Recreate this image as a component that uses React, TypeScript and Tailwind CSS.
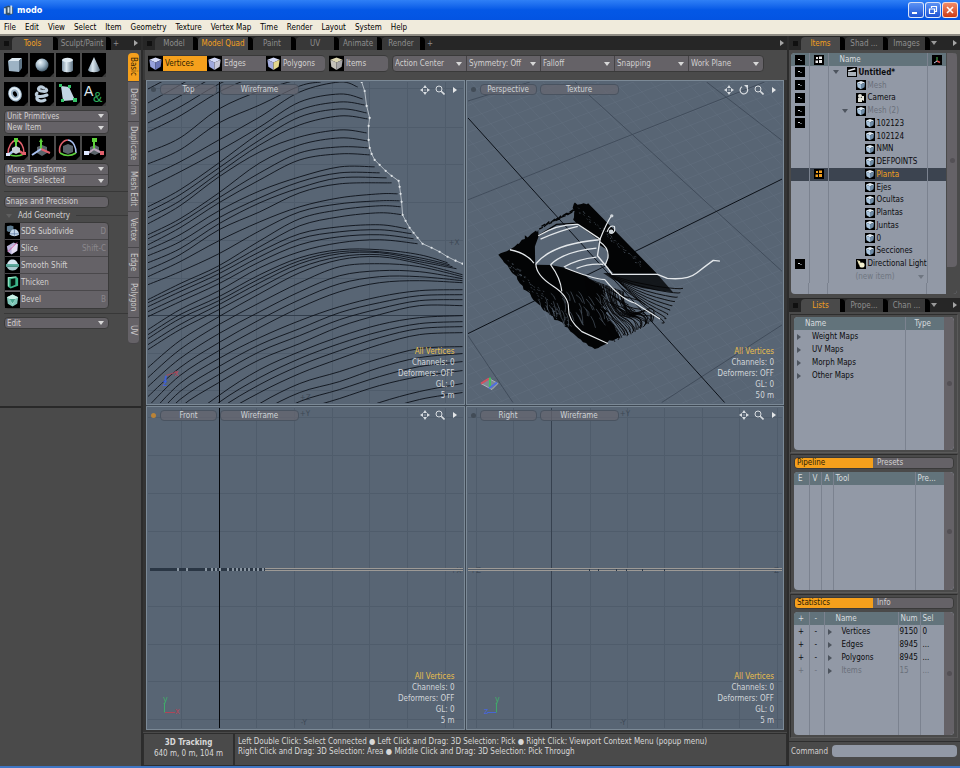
import React from "react";

type Pt = [number, number];

/* ---------- small drawing helpers ---------- */

function smooth(points: Pt[]): string {
  let d = `M${points[0][0]} ${points[0][1]}`;
  for (let i = 0; i < points.length - 1; i++) {
    const p0 = points[Math.max(0, i - 1)];
    const p1 = points[i];
    const p2 = points[i + 1];
    const p3 = points[Math.min(points.length - 1, i + 2)];
    const c1 = [p1[0] + (p2[0] - p0[0]) / 6, p1[1] + (p2[1] - p0[1]) / 6];
    const c2 = [p2[0] - (p3[0] - p1[0]) / 6, p2[1] - (p3[1] - p1[1]) / 6];
    d += `C${c1[0].toFixed(1)} ${c1[1].toFixed(1)} ${c2[0].toFixed(1)} ${c2[1].toFixed(1)} ${p2[0]} ${p2[1]}`;
  }
  return d;
}

function Down({ className = "" }: { className?: string }) {
  return (
    <svg viewBox="0 0 6 4" className={`h-[4px] w-[6px] shrink-0 ${className}`} fill="currentColor" aria-hidden="true">
      <path d="M0 0h6L3 4z" />
    </svg>
  );
}

function Right({ className = "" }: { className?: string }) {
  return (
    <svg viewBox="0 0 4 6" className={`h-[6px] w-[4px] shrink-0 ${className}`} fill="currentColor" aria-hidden="true">
      <path d="M0 0v6L4 3z" />
    </svg>
  );
}

/* ---------- icons ---------- */

function Cube({ top = "#dfe9f2", left = "#a9c4dc", right = "#6e8aa4", className = "h-[16px] w-[16px]" }) {
  return (
    <svg viewBox="0 0 16 16" className={`shrink-0 bg-black ${className}`} aria-hidden="true">
      <path d="M1.500 4L8 1.500 14.500 4 8 6.800z" fill={top} />
      <path d="M1.500 4L8 6.800v8L2.500 11.500z" fill={left} />
      <path d="M14.500 4L8 6.800v8l5.500-3.300z" fill={right} />
    </svg>
  );
}

function Tile({ kind }: { kind: string }) {
  const g = `g-${kind}`;
  const red = "#e0606c";
  const green = "#5ed03c";
  const blue = "#a8c0f0";
  return (
    <svg viewBox="0 0 24 24" className="h-[24px] w-[24px] bg-black" aria-hidden="true">
      <defs>
        <radialGradient id={g} cx="35%" cy="30%" r="75%">
          <stop offset="0" stopColor="#eef6fb" />
          <stop offset=".5" stopColor="#9fb6c6" />
          <stop offset="1" stopColor="#3f5566" />
        </radialGradient>
        <linearGradient id={`${g}l`}>
          <stop offset="0" stopColor="#8297a8" />
          <stop offset=".4" stopColor="#dce8f0" />
          <stop offset="1" stopColor="#5d7283" />
        </linearGradient>
      </defs>
      {kind === "cube" && (
        <g>
          <path d="M4 8l4-3h10l-3 3z" fill="#dce8f0" />
          <path d="M4 8h11v11l-10-1z" fill="#9db3c4" />
          <path d="M15 8l3-3v10l-3 4z" fill="#5e7485" />
        </g>
      )}
      {kind === "sphere" && <circle cx="12" cy="12" r="6.500" fill={`url(#${g})`} />}
      {kind === "cylinder" && (
        <g>
          <path d="M6 7v10c0 3 11 3 11 0V7z" fill={`url(#${g}l)`} />
          <ellipse cx="11.500" cy="7" rx="5.500" ry="2.200" fill="#e2edf4" />
        </g>
      )}
      {kind === "cone" && <path d="M12 4l6 13c-1 3-11 3-12 0z" fill={`url(#${g}l)`} />}
      {kind === "torus" && (
        <g fill="none" transform="rotate(-25 11 12)">
          <ellipse cx="11" cy="12" rx="4.300" ry="5.200" stroke="#9fb6c8" strokeWidth="4.800" />
          <ellipse cx="11" cy="11.700" rx="4.800" ry="5.700" stroke="#e6f0f7" strokeWidth="2" />
        </g>
      )}
      {kind === "tube" && (
        <path d="M14 6C9 3 6 8 11 9s7 0 5-2M7 11c-3 3 3 5 10 2M7 15c-1 4 5 5 8 3" fill="none" stroke="#bccddb" strokeWidth="3" strokeLinecap="round" />
      )}
      {kind === "pen" && (
        <g>
          <path d="M5 4l8 1 6 13-12 1z" fill="#c2d6e4" />
          <path d="M3 2h3v3H3zM12 3h3v3h-3zM17 16h4v4h-4zM5 17h3v3H5z" fill="#35c468" />
        </g>
      )}
      {kind === "text" && (
        <g className="font-['Liberation_Sans',sans-serif]">
          <text x="2" y="14" fontSize="14" fill="#dfe8ee">A</text>
          <text x="11" y="20" fontSize="14" fill="#2fae5e">&amp;</text>
        </g>
      )}
      {kind === "transform" && (
        <g fill="none" strokeWidth="1.500">
          <path d="M4 18C4 10 8 5 12 4c5 1 8 7 8 13" stroke={red} />
          <path d="M4 18q8 4 16 0" stroke={green} />
          <path d="M12 13V4" stroke={green} strokeWidth="2" />
          <path d="M12 13l-8 6" stroke={blue} strokeWidth="2.500" />
          <path d="M12 13l8 5" stroke={red} strokeWidth="2.500" />
          <path d="M8 12l4-2 4 2v4l-4 2-4-2z" fill="#c7cfd6" />
          <path d="M10 2h4v4h-4z" fill={green} />
          <path d="M2 17h4v3H2z" fill="#dfe8ff" />
          <path d="M18 16h4v3h-4z" fill={red} />
        </g>
      )}
      {kind === "move" && (
        <g>
          <path d="M7 11l5-2 5 2v6l-5 3-5-3z" fill="#5b646b" />
          <path d="M11 14V5" stroke={green} strokeWidth="2" />
          <path d="M11 2l2 4H9z" fill={green} />
          <path d="M11 13l9 4" stroke={red} strokeWidth="2" />
          <path d="M11 13l-9 6" stroke={blue} strokeWidth="2" />
        </g>
      )}
      {kind === "rotate" && (
        <g fill="none">
          <path d="M7 10l5-2 5 2v6l-5 2-5-2z" fill="#5b646b" />
          <path d="M4 17C2 10 7 4 12 4" stroke={red} strokeWidth="1.600" />
          <path d="M12 4c6 1 8 8 8 13" stroke={blue} strokeWidth="1.600" />
          <path d="M4 17q8 5 16 0" stroke={green} strokeWidth="1.600" />
        </g>
      )}
      {kind === "scale" && (
        <g>
          <path d="M8 11l5-2 4 2v6l-4 2-5-2z" fill="#5b646b" />
          <path d="M12 13V5" stroke={green} strokeWidth="2" />
          <path d="M12 13l-7 5M12 13l8 4" stroke="#b7a5b8" strokeWidth="2" />
          <path d="M10 2h5v4h-5z" fill={green} />
          <path d="M2 15h5v4H2z" fill="#dfe8ff" />
          <path d="M18 15h4v4h-4z" fill={red} />
        </g>
      )}
      <path d="M24 20v4h-4z" fill="#3c3c3c" />
    </svg>
  );
}

function GeoIcon({ kind }: { kind: string }) {
  return (
    <svg viewBox="0 0 16 16" className="h-[16px] w-[15px] shrink-0 bg-black" aria-hidden="true">
      {kind === "sds" && (
        <g>
          <path d="M2 3l4-1 3 1v5l-5 1-2-1z" fill="#5f7d92" />
          <path d="M5 12c0-8 10-8 10 0-3 2-7 2-10 0z" fill="#c6d8ea" />
          <path d="M10 6v7M5 11h10" stroke="#55719c" strokeWidth=".7" />
        </g>
      )}
      {kind === "slice" && (
        <g>
          <path d="M2 6l7-4 5 2-1 7-6 4-4-3z" fill="#b9b3d8" />
          <path d="M7 6l6-3v8l-6 3z" fill="#e4dcf0" />
          <path d="M3 12L13 2" stroke="#d04f9a" strokeWidth="1" />
        </g>
      )}
      {kind === "smooth" && (
        <g>
          <path d="M2 8c1-8 11-8 12 0z" fill="#d5e6f0" />
          <path d="M1 7h14v3H1z" fill="#5aa79a" />
          <path d="M2 10h12c-2 5-10 5-12 0z" fill="#a9cbd0" />
        </g>
      )}
      {kind === "thicken" && (
        <g>
          <path d="M3 3l9-1 2 2v8l-8 3-3-2z" fill="#3cb58a" />
          <path d="M6 5l5-1v7l-5 2z" fill="#04180f" />
          <path d="M3 3l9-1v1L4 4v9l-1-1z" fill="#a9ecd0" />
        </g>
      )}
      {kind === "bevel" && (
        <g>
          <path d="M2 5l6-3 6 3-1 7-5 3-5-3z" fill="#7fc6b8" />
          <path d="M2 5l6-3 6 3-3 2-3 6-3-6z" fill="#c9f0e6" />
          <path d="M5 7h6l-3 5z" fill="#4da58f" />
        </g>
      )}
    </svg>
  );
}

const NavPan = () => (
  <svg viewBox="0 0 10 10" className="h-[10px] w-[10px]" fill="#d9dde1" aria-hidden="true">
    <path d="M5 0l2 3H3zM5 10l2-3H3zM0 5l3-2v4zM10 5L7 3v4z" />
    <path d="M4.500 4.500h1v1h-1z" />
  </svg>
);
const NavRotate = () => (
  <svg viewBox="0 0 10 10" className="h-[10px] w-[10px]" fill="none" stroke="#d9dde1" strokeWidth="1.200" aria-hidden="true">
    <path d="M3 1.800A3.800 3.800 0 1 0 8 3" />
    <path d="M5 0h4v4z" fill="#d9dde1" stroke="none" />
  </svg>
);
const NavZoom = () => (
  <svg viewBox="0 0 10 10" className="h-[10px] w-[10px]" fill="none" stroke="#d9dde1" aria-hidden="true">
    <circle cx="4" cy="4" r="3" />
    <path d="M6.200 6.200L9.500 9.500" strokeWidth="1.600" />
  </svg>
);

/* ---------- top viewport: terrain contour lines ---------- */

const XS = [148, 180, 219, 260, 300, 340, 380, 420, 463];

// Heights of each contour at the XS stations; `end` closes a line that stops at the boundary.
const CONTOURS: { y: number[]; end?: Pt }[] = [
  { y: [89, 72] },
  { y: [103, 85, 62] },
  { y: [113, 96, 74] },
  { y: [123, 107, 84, 66] },
  { y: [132, 116, 92, 74] },
  { y: [152, 138, 109, 91, 79] },
  { y: [164, 150, 123, 105, 86], end: [321, 82] },
  { y: [177, 162, 140, 117, 92, 82], end: [358, 87] },
  { y: [188, 172, 151, 127, 102, 94], end: [363, 99] },
  { y: [207, 190, 163, 133, 110, 102], end: [365, 105] },
  { y: [212, 195, 168, 140, 117, 109], end: [367, 113] },
  { y: [218, 201, 173, 145, 125, 116], end: [368, 119] },
  { y: [224, 206, 177, 152, 137, 130], end: [367, 133] },
  { y: [235, 219, 193, 163, 145, 138], end: [368, 141] },
  { y: [239, 223, 198, 173, 153, 147], end: [370, 148] },
  { y: [245, 228, 203, 180, 160, 154], end: [370, 155] },
  { y: [250, 235, 211, 191, 177, 167], end: [375, 167] },
  { y: [256, 242, 218, 198, 182, 173], end: [380, 173] },
  { y: [263, 249, 224, 203, 188, 178], end: [387, 178] },
  { y: [270, 255, 230, 212, 193, 184], end: [392, 183] },
  { y: [277, 262, 241, 222, 207, 198, 194], end: [398, 194] },
  { y: [285, 272, 254, 231, 212, 204, 201], end: [400, 201] },
  { y: [300, 284, 266, 241, 219, 210, 206], end: [401, 207] },
  { y: [303, 288, 270, 247, 226, 217, 213], end: [403, 215] },
  { y: [307, 292, 274, 252, 234, 227, 225], end: [407, 229] },
  { y: [312, 297, 279, 257, 239, 232, 230], end: [412, 234] },
  { y: [317, 302, 284, 262, 245, 237, 235], end: [414, 239] },
  { y: [330, 310, 291, 268, 252, 243, 240], end: [418, 244] },
  { y: [335, 315, 297, 275, 258, 250, 250, 255], end: [448, 263] },
  { y: [339, 319, 301, 279, 261, 252, 252, 258], end: [450, 265] },
  { y: [345, 325, 305, 283, 264, 254, 253, 260], end: [453, 267] },
  { y: [350, 330, 310, 288, 268, 257, 255, 262], end: [457, 269] },
  { y: [368, 341, 317, 294, 273, 260, 257, 264, 275] },
  { y: [378, 350, 325, 303, 283, 267, 264, 267, 277] },
  { y: [387, 359, 334, 312, 292, 276, 271, 272, 279] },
  { y: [397, 368, 343, 320, 300, 284, 277, 277, 281] },
  { y: [407, 376, 351, 328, 308, 292, 283, 281, 283] },
  { y: [417, 384, 359, 338, 321, 307, 297, 291, 290] },
  { y: [426, 392, 367, 345, 329, 313, 303, 296, 295] },
  { y: [434, 400, 375, 352, 336, 320, 309, 301, 300] },
  { y: [444, 408, 383, 360, 344, 327, 315, 306, 306] },
  { y: [478, 428, 396, 370, 352, 337, 325, 318, 316] },
  { y: [486, 436, 403, 378, 359, 344, 332, 324, 322] },
  { y: [494, 443, 410, 385, 366, 351, 338, 329, 327] },
  { y: [502, 450, 417, 393, 374, 359, 345, 335, 333] },
  { y: [520, 466, 432, 404, 384, 372, 359, 349, 347] },
  { y: [530, 476, 441, 413, 393, 382, 368, 358, 354] },
  { y: [540, 486, 451, 423, 402, 390, 377, 367, 362] },
  { y: [550, 496, 461, 433, 412, 399, 386, 377, 371] },
  { y: [560, 520, 490, 460, 440, 418, 403, 392, 384] },
  { y: [570, 530, 500, 470, 450, 428, 412, 400, 393] },
];

const EDGE: Pt[] = [
  [362, 82], [365, 91], [367, 106], [370, 118], [369, 126], [369, 140], [370, 148], [372, 154], [375, 160],
  [380, 165], [386, 171], [392, 176], [399, 181], [400, 187], [401, 194], [402, 202], [403, 215], [406, 221],
  [410, 228], [414, 233], [418, 238], [423, 244], [432, 248], [440, 252], [448, 257], [456, 261], [463, 264],
];

function GridLines({ xs, ys, axisX, axisY, x0, y0 }: { xs: number[]; ys: number[]; axisX: number; axisY?: number; x0: number; y0: number }) {
  return (
    <g shapeRendering="crispEdges" stroke="#4f5c6b">
      {xs.map((x) => (
        <path key={`x${x}`} d={`M${x}.5 ${y0}v322`} />
      ))}
      {ys.map((y) => (
        <path key={`y${y}`} d={`M${x0} ${y}.5h315`} stroke={y === axisY ? "#323d4b" : "#4f5c6b"} />
      ))}
      <path d={`M${axisX}.5 ${y0}v322`} stroke={x0 > 400 ? "#36414f" : "#05080c"} />
    </g>
  );
}

function AxisText({ x, y, children }: { x: number; y: number; children: React.ReactNode }) {
  return (
    <text x={x} y={y} fontSize="8" fill="#3d4855">
      {children}
    </text>
  );
}

function TopScene() {
  return (
    <svg viewBox="148 82 315 321" preserveAspectRatio="xMidYMid slice" className="block h-full w-full">
      <GridLines xs={[181, 256, 294, 332, 369, 407, 445]} ys={[88, 127, 164, 202, 240, 278, 315, 353, 390]} axisX={219} axisY={315} x0={148} y0={82} />
      <AxisText x={449} y={245}>+X</AxisText>
      <AxisText x={300} y={400}>+Z</AxisText>
      <g fill="none" stroke="#0c1118" strokeWidth=".9">
        {CONTOURS.map((c, i) => {
          const pts: Pt[] = c.y.map((y, k) => [XS[k], y]);
          if (c.end) pts.push(c.end);
          return <path key={i} d={smooth(pts)} />;
        })}
      </g>
      <polyline points={EDGE.map((p) => p.join(",")).join(" ")} fill="none" stroke="#b4bcc4" />
      {EDGE.map(([x, y]) => (
        <circle key={`${x}-${y}`} cx={x} cy={y} r="1.100" fill="#dfe4e8" />
      ))}
      <path d="M166 376l9-3 3-1" stroke="#a8485a" fill="none" />
      <text x="174" y="376" fontSize="9" fill="#b04658">x</text>
      <path d="M166 376l-1 7" stroke="#4060d0" fill="none" strokeWidth="2" />
      <text x="163" y="386" fontSize="9" fill="#3c5ee0">z</text>
    </svg>
  );
}

/* ---------- perspective viewport: terrain mesh ---------- */

function jitter(i: number): number {
  const v = Math.sin(i * 12.9898) * 43758.5453;
  return v - Math.floor(v);
}

// Ragged outline between two points, as the ends of many short survey lines.
function ragged(x1: number, y1: number, x2: number, y2: number, n: number, amp: number, seed: number): string {
  let d = "";
  for (let i = 1; i <= n; i++) {
    const t = i / n;
    const s = i === n ? 0 : (jitter(seed + i) - 0.5) * amp;
    d += `L${(x1 + (x2 - x1) * t + s).toFixed(1)} ${(y1 + (y2 - y1) * t + (i % 2 ? s : -s)).toFixed(1)}`;
  }
  return d;
}

function PerspectiveScene() {
  const famA = Array.from({ length: 44 }, (_, i) => i - 24);
  const famB = Array.from({ length: 50 }, (_, i) => i - 12);
  const west =
    "M85 195" +
    ragged(85, 195, 125, 176, 5, 8, 3) +
    ragged(125, 176, 205, 120, 12, 14, 20) +
    "L206 140L195 170L196 225L242 226L285 234L345 256" +
    ragged(345, 256, 405, 300, 6, 8, 40) +
    ragged(405, 300, 395, 350, 6, 18, 50) +
    ragged(395, 350, 435, 410, 6, 18, 60) +
    ragged(435, 410, 450, 442, 4, 12, 66) +
    ragged(450, 442, 375, 478, 8, 8, 70) +
    ragged(375, 478, 325, 445, 6, 5, 80) +
    ragged(325, 445, 190, 330, 16, 8, 90) +
    ragged(190, 330, 85, 195, 16, 6, 120) +
    "z";
  const east =
    "M310 90" +
    ragged(310, 90, 312, 42, 5, 8, 140) +
    ragged(312, 42, 355, 40, 6, 8, 150) +
    "L560 250L430 250L408 228L416 205L412 180L388 165L386 150L325 105z";
  return (
    <svg viewBox="468 82 315 321" preserveAspectRatio="xMidYMid slice" className="block h-full w-full">
      <g stroke="#657282" strokeWidth=".7" opacity=".7">
        {famA.map((k) => (
          <path key={`a${k}`} d={`M${435 + k * 18} 82L${725 + k * 18.5} 403`} />
        ))}
        {famB.map((k) => (
          <path key={`b${k}`} d={`M468 ${200 + k * 13.5}L783 ${76 + k * 12.9}`} />
        ))}
      </g>
      <g stroke="#3e4a58" strokeWidth=".9" fill="none">
        <path d="M468 200L765 82M575 82L715 210L783 272M707 82L783 141M468 101L530 82M468 336L513 403M783 325L662 403" />
      </g>
      <path d="M468 334L783 179" stroke="#0b1017" fill="none" />
      <path d="M538 236L557 225 578 225 600 240 608 253 607 265 585 269 565 267 536 265 534 252z" fill="#586574" />
      <path d="M468 118L725 403" stroke="#0b1017" fill="none" />
      <g transform="translate(470 190) scale(.33333)">
        <path d={west} fill="#030405" />
        <path d={east} fill="#030405" />
        <path d="M400 250h160l50 58-90-12-90-26z" fill="#030405" opacity=".8" />
        {/* loose line ends along the dome's rim */}
        <g fill="none" stroke="#030405" strokeWidth="4">
          {Array.from({ length: 15 }, (_, i) => (
            <path key={i} d={`M${208 + i * 7} ${118 - i * 3.5 - jitter(i) * 5}l${8 + jitter(i + 4) * 8} -${3 + jitter(i + 8) * 8}`} />
          ))}
          <path d="M205 138L260 104L322 100" />
        </g>
        {/* eroded slope strands */}
        <g fill="none" stroke="#030405" strokeWidth="2.600">
          {Array.from({ length: 30 }, (_, i) => {
            const a = 345 + i * 4;
            const by = 262 + i * 1.5;
            const ex = 432 + i * 4;
            const ey = 450 - i * 2 + jitter(i) * 10;
            const w = 10 + jitter(i + 5) * 40;
            return <path key={i} d={`M${a} ${by}q${w - 20} ${70 + jitter(i + 60) * 30} ${(ex - a) * 0.6} ${(ey - by) * 0.7}t${(ex - a) * 0.4} ${(ey - by) * 0.3}`} />;
          })}
          {Array.from({ length: 9 }, (_, i) => (
            <path key={`r${i}`} d={`M${420 + i * 4} ${256 + i * 3}q70 ${24 + i * 6} ${140 - i * 4} ${34 + i * 8}t${80 - i * 8} ${6 + i * 2}`} />
          ))}
          {Array.from({ length: 12 }, (_, i) => (
            <path key={`t${i}`} d={`M${400 + jitter(i) * 60} ${290 + i * 6}q30 ${10 + jitter(i + 4) * 20} ${60 + jitter(i + 3) * 30} ${20 + jitter(i + 9) * 30}`} />
          ))}
        </g>
        <g fill="none" stroke="#667483" strokeWidth="1.500">
          {Array.from({ length: 40 }, (_, i) => {
            const x = 205 + (i % 20) * 10 + jitter(i) * 14;
            const y = (i < 20 ? 300 : 350) + jitter(i + 40) * 50;
            const len = 14 + jitter(i + 9) * 30;
            return <path key={i} d={`M${x} ${y}q${4 + jitter(i + 3) * 10} ${len / 3} ${6 + jitter(i) * 14} ${len}`} />;
          })}
          {Array.from({ length: 70 }, (_, i) => {
            const t = jitter(i + 70);
            return <path key={`d${i}`} d={`M${110 + t * 180 + jitter(i) * 20} ${205 + t * 190 + jitter(i + 1) * 30}l3 4`} />;
          })}
          {Array.from({ length: 60 }, (_, i) => {
            const t = jitter(i + 150);
            return <path key={`u${i}`} d={`M${325 + t * 190} ${50 + t * 165 + jitter(i) * 18}l3 3`} />;
          })}
        </g>
        <g fill="none" stroke="#e3e7ea" strokeWidth="4" strokeLinejoin="round">
          <path d="M120 180q50 10 72 40M198 222q50-60 190-72M242 225q40-40 138-50M282 232q40-24 98-30M205 138q60-36 120-34M212 148q60-26 112-38M325 104l66 44-8 50 30 36 14 20h136l30 12q60 6 88-16t50-38l20 2" />
          <path d="M198 222q0 34 50 66t48 68 40 70l78 36M242 225q30 40 34 80M285 234q80 32 120 36 50 60 90 70l76 48" strokeWidth="3.500" />
          <path d="M320 236q40-16 80-12M390 150q20-50 36-74M412 126q8-22 22-16 4 20-10 20M390 156q30 20 24 50l-8 20" strokeWidth="3.500" />
        </g>
        <circle cx="426" cy="78" r="5" fill="#cfd5da" />
        <circle cx="424" cy="126" r="7" fill="#cfd5da" />
      </g>
      <path d="M481 384l8-5 9 5-6 6z" fill="#7d8994" stroke="#aab3bb" />
      <path d="M489 379l-8 5" stroke="#d05060" strokeWidth="2" />
      <path d="M490 378v10" stroke="#43c05f" strokeWidth="2" />
      <path d="M489 389l8-6" stroke="#4d6ee0" strokeWidth="2" />
    </svg>
  );
}

/* ---------- front and right viewports ---------- */

function FrontScene() {
  const dots = [177, 186, 205, 211, 215, 219, 227, 232, 236, 240, 244, 248, 253, 257, 262];
  return (
    <svg viewBox="148 407 315 321" preserveAspectRatio="xMidYMid slice" className="block h-full w-full">
      <GridLines xs={[181, 256, 294, 332, 369, 407, 445]} ys={[416, 454, 492, 530, 605, 643, 680, 718]} axisX={219} x0={148} y0={407} />
      <AxisText x={300} y={415}>+Y</AxisText>
      <AxisText x={301} y={725}>-Y</AxisText>
      <AxisText x={451} y={572}>+X</AxisText>
      <g shapeRendering="crispEdges">
        <path d="M150 567.500h313M150 569.500h313" stroke="#9d9a96" />
        <path d="M150 568.500h313" stroke="#505a66" />
        <path d="M150 567h115v3H150z" fill="#2a3644" />
        {dots.map((x) => (
          <path key={x} d={`M${x} 567h2v3h-2z`} fill="#8995a1" />
        ))}
      </g>
      <path d="M164.500 702v10" stroke="#3fae6a" />
      <text x="163" y="701" fontSize="9" fill="#3fae6a">y</text>
      <path d="M165 712h10" stroke="#b04658" />
      <text x="175" y="713" fontSize="9" fill="#b04658">x</text>
    </svg>
  );
}

function RightScene() {
  return (
    <svg viewBox="468 407 315 321" preserveAspectRatio="xMidYMid slice" className="block h-full w-full">
      <GridLines xs={[476, 513, 590, 627, 664, 702, 739, 777]} ys={[416, 454, 492, 530, 605, 643, 680, 718]} axisX={551} x0={468} y0={407} />
      <AxisText x={620} y={415}>+Y</AxisText>
      <AxisText x={620} y={725}>-Y</AxisText>
      <AxisText x={470} y={572}>+Z</AxisText>
      <AxisText x={772} y={572}>-Z</AxisText>
      <g shapeRendering="crispEdges">
        <path d="M468 567.500h315M468 569.500h315" stroke="#9d9a96" />
        <path d="M468 568.500h315" stroke="#505a66" />
        {[589, 598, 616, 626, 642, 664].map((x) => (
          <path key={x} d={`M${x} 568h1v2h-1z`} fill="#2a3644" />
        ))}
      </g>
      <path d="M496.500 702v10" stroke="#3fae6a" />
      <text x="495" y="701" fontSize="9" fill="#3fae6a">y</text>
      <path d="M487 712h9" stroke="#4766d8" />
      <text x="484" y="713" fontSize="9" fill="#4766d8">z</text>
    </svg>
  );
}

/* ---------- shared controls ---------- */

function Drop({ label, className = "" }: { label: string; className?: string }) {
  return (
    <div className={`relative flex items-center ${className}`}>
      <select aria-label={label} className="h-full w-full appearance-none bg-transparent pr-3 pl-[2px] text-[#d2d0d0] outline-none">
        <option>{label}</option>
      </select>
      <Down className="pointer-events-none absolute right-[4px] text-[#d8d8d8]" />
    </div>
  );
}

function Tab({ label, active = false, className = "" }: { label: string; active?: boolean; className?: string }) {
  return (
    <button
      type="button"
      className={`relative flex h-full items-center justify-center rounded-t-[4px] border-r-[5px] border-black whitespace-nowrap ${
        active ? "bg-[#4a4a4a] text-[#f3a01f]" : "bg-[#383838] text-[#8e8e8e]"
      } ${className}`}
    >
      {label}
    </button>
  );
}

function TabBar({ children, more = false }: { children: React.ReactNode; more?: boolean }) {
  return (
    <div className="flex h-[14px] items-end bg-[#262626] pt-px pr-[3px]">
      <span className="mr-[3px] mb-[4px] ml-[4px] h-[5px] w-[5px] bg-[#101010]" />
      {children}
      {more ? (
        <Down className="mb-[5px] ml-[1px] text-[#9a9a9a]" />
      ) : (
        <span className="ml-[2px] self-center leading-none text-[#8e8e8e]">+</span>
      )}
      <Right className="mb-[4px] ml-auto text-[#a5a5a5]" />
    </div>
  );
}

function Viewport({ name, mode, scale, rotate = false, active = false, children }: { name: string; mode: string; scale: string; rotate?: boolean; active?: boolean; children: React.ReactNode }) {
  return (
    <section aria-label={name} className="relative min-h-0 min-w-0 overflow-hidden border border-[#7b8996] bg-[#586574] p-px contain-size">
      {children}
      <div className="absolute inset-x-0 top-[3px] flex items-center gap-[3px] pr-[4px] pl-[4px] text-[#cfd3d6]">
        <span className={`mr-[1px] h-[5px] w-[5px] rounded-full ${active ? "bg-[#b98338]" : "bg-[#424c57]"}`} />
        <button type="button" className="h-[11px] w-[57px] rounded-[4px] border border-[#495360] bg-[#666770]/70 leading-[9px]">{name}</button>
        <button type="button" className="h-[11px] w-[79px] rounded-[4px] border border-[#495360] bg-[#666770]/70 leading-[9px]">{mode}</button>
        <div className="ml-auto flex items-center gap-[5px]">
          <button type="button" aria-label="Pan"><NavPan /></button>
          {rotate && <button type="button" aria-label="Rotate"><NavRotate /></button>}
          <button type="button" aria-label="Zoom"><NavZoom /></button>
          <button type="button" aria-label="Viewport menu"><Right className="mx-[3px] text-[#e4e6e8]" /></button>
        </div>
      </div>
      <div className="absolute right-[9px] bottom-[3px] text-right leading-[11px] text-[#d2d6da]">
        <p className="text-[#e9bf4c]">All Vertices</p>
        <p>Channels: 0</p>
        <p>Deformers: OFF</p>
        <p>GL: 0</p>
        <p>{scale}</p>
      </div>
    </section>
  );
}

/* ---------- left tool palette ---------- */

const GEO = [
  ["SDS Subdivide", "D", "sds"],
  ["Slice", "Shift-C", "slice"],
  ["Smooth Shift", "", "smooth"],
  ["Thicken", "", "thicken"],
  ["Bevel", "B", "bevel"],
];

const SIDE_TABS: [string, string][] = [
  ["Basic", "h-[29px]"],
  ["Deform", "h-[40px]"],
  ["Duplicate", "h-[44px]"],
  ["Mesh Edit", "h-[46px]"],
  ["Vertex", "h-[36px]"],
  ["Edge", "h-[30px]"],
  ["Polygon", "h-[40px]"],
  ["UV", "h-[26px]"],
];

function TileRow({ kinds }: { kinds: string[] }) {
  return (
    <div className="flex gap-[2px]">
      {kinds.map((k) => (
        <button key={k} type="button" aria-label={k}>
          <Tile kind={k} />
        </button>
      ))}
    </div>
  );
}

function DropPair({ items }: { items: string[] }) {
  return (
    <div className="divide-y divide-[#4a484b] rounded-[4px] border border-[#3a3a3a] bg-[#656267]">
      {items.map((t) => (
        <Drop key={t} label={t} className="h-[11px]" />
      ))}
    </div>
  );
}

function ToolPalette() {
  return (
    <aside className="flex w-[143px] shrink-0 flex-col border-r-2 border-[#2c2c2c]">
      <TabBar>
        <Tab label="Tools" active className="w-[46px]" />
        <Tab label="Sculpt/Paint" className="w-[53px]" />
      </TabBar>
      <div className="flex h-[358px] border-b-2 border-[#292929] pt-[3px] pl-[4px]">
        <div className="flex w-[124px] flex-col">
          <div className="flex w-[105px] flex-col">
            <TileRow kinds={["cube", "sphere", "cylinder", "cone"]} />
            <div className="mt-[5px]"><TileRow kinds={["torus", "tube", "pen", "text"]} /></div>
            <div className="mt-[4px]"><DropPair items={["Unit Primitives", "New Item"]} /></div>
            <div className="mt-[2px]"><TileRow kinds={["transform", "move", "rotate", "scale"]} /></div>
            <div className="mt-[3px]"><DropPair items={["More Transforms", "Center Selected"]} /></div>
          </div>
          <hr className="mt-[4px] border-[#383838]" />
          <button type="button" className="mt-[4px] h-[12px] w-[105px] rounded-[4px] border border-[#3a3a3a] bg-[#656267] pl-[1px] text-left leading-[10px] text-[#d2d0d0]">
            Snaps and Precision
          </button>
          <div className="mt-[1px] flex h-[13px] items-center gap-[6px] pl-[2px] text-[#d2d0d0]">
            <Down className="text-[#5e5e5e]" />
            <span>Add Geometry</span>
            <span className="h-px flex-1 bg-[#3a3a3a]" />
          </div>
          <div className="w-[105px] divide-y divide-[#4a484b] rounded-[4px] border border-[#3a3a3a] bg-[#656267]">
            {GEO.map(([label, key, icon]) => (
              <button key={label} type="button" className="flex h-[17px] w-full items-center gap-[1px] pr-[2px] text-[#d2d0d0]">
                <GeoIcon kind={icon} />
                <span>{label}</span>
                <span className="ml-auto text-[#8b888d]">{key}</span>
              </button>
            ))}
          </div>
          <hr className="mt-[4px] border-[#383838]" />
          <Drop label="Edit" className="mt-[3px] h-[12px] w-[105px] rounded-[4px] border border-[#3a3a3a] bg-[#656267]" />
        </div>
        <div className="flex w-[11px] flex-col">
          {SIDE_TABS.map(([t, h], i) => (
            <button
              key={t}
              type="button"
              className={`flex w-[11px] items-center justify-center border-b border-[#474549] leading-[11px] [writing-mode:vertical-rl] ${h} ${
                i === 0 ? "rounded-t-[4px] bg-[#f5a01c] text-[#2c1c04]" : "bg-[#656267] text-[#cdcbcc]"
              } ${i === SIDE_TABS.length - 1 ? "rounded-b-[4px]" : ""}`}
            >
              {t}
            </button>
          ))}
        </div>
      </div>
    </aside>
  );
}

/* ---------- right column ---------- */

const Eye = () => (
  <svg viewBox="0 0 10 10" className="mx-auto block h-[10px] w-[10px] bg-black" aria-hidden="true">
    <path d="M3 4h2v1H3z" fill="#d0d4d8" />
    <path d="M5 5h2v1H5z" fill="#60666c" />
  </svg>
);
const Blocks = ({ color }: { color: string }) => (
  <svg viewBox="0 0 10 10" className="mx-auto block h-[10px] w-[10px] bg-black" fill={color} aria-hidden="true">
    <path d="M2 2h2v2H2zM5 1.500h3v2.500H5zM1.500 5.500h2.500V8H1.500zM5 5h3v3H5z" />
  </svg>
);

const ITEMS = [
  { t: "Untitled*", d: 0, icon: "scene", eye: true, open: true, bold: true },
  { t: "Mesh", d: 1, icon: "mesh", eye: true, dim: true },
  { t: "Camera", d: 1, icon: "camera", eye: true },
  { t: "Mesh (2)", d: 1, icon: "mesh", eye: true, dim: true, open: true },
  { t: "102123", d: 2, icon: "mesh", eye: true },
  { t: "102124", d: 2, icon: "mesh" },
  { t: "NMN", d: 2, icon: "mesh" },
  { t: "DEFPOINTS", d: 2, icon: "mesh" },
  { t: "Planta", d: 2, icon: "mesh", sel: true },
  { t: "Ejes", d: 2, icon: "mesh" },
  { t: "Ocultas", d: 2, icon: "mesh" },
  { t: "Plantas", d: 2, icon: "mesh" },
  { t: "Juntas", d: 2, icon: "mesh" },
  { t: "0", d: 2, icon: "mesh" },
  { t: "Secciones", d: 2, icon: "mesh" },
  { t: "Directional Light", d: 1, icon: "light", eye: true },
];

function ItemIcon({ kind }: { kind: string }) {
  if (kind === "mesh") return <Cube className="h-[10px] w-[10px]" />;
  return (
    <svg viewBox="0 0 10 10" className="h-[10px] w-[10px] shrink-0 bg-black" aria-hidden="true">
      {kind === "scene" && (
        <g fill="#aab2ba">
          <path d="M1 5h8v4H1z" />
          <path d="M1 3l7-2 .5 1.500L1.500 4.500z" fill="#e4e8ec" />
        </g>
      )}
      {kind === "camera" && (
        <g fill="#e4e4da">
          <circle cx="4" cy="3" r="2" />
          <path d="M2 5h4v4H2zM6 3h2v5L6 7z" />
        </g>
      )}
      {kind === "light" && (
        <g>
          <path d="M1 1l3 1 1 3-2 1z" fill="#e8e3b8" />
          <circle cx="6" cy="6" r="2.600" fill="#f3efcf" />
        </g>
      )}
    </svg>
  );
}

function ScrollBar({ className = "" }: { className?: string }) {
  return (
    <div className={`flex w-[10px] shrink-0 items-center justify-center rounded-r-[4px] bg-[#656267] ${className}`}>
      <span className="h-[5px] w-[5px] rounded-full bg-[#535055]" />
    </div>
  );
}

const HEAD = "bg-[#62737b] font-normal text-[#d8dcdf]";
const LINE = "border-r border-[#7b828f]";

function ItemsPanel() {
  return (
    <div className="mx-[3px] ml-[2px] flex h-[241px] overflow-hidden rounded-[4px] bg-[#9299a6]">
      <div className="relative min-w-0 flex-1">
        <table className="h-[230px] w-full table-fixed border-collapse text-[#0b0b0d]">
          <colgroup>
            <col className="w-[18px]" />
            <col className="w-[19px]" />
            <col />
            <col className="w-[19px]" />
          </colgroup>
          <thead>
            <tr className={`h-[13px] ${HEAD}`}>
              <th className={`${LINE} p-0`}><Eye /></th>
              <th className={`${LINE} p-0`}><Blocks color="#e8e8e8" /></th>
              <th className={`${LINE} p-0 pl-[11px] text-left font-normal`}>Name</th>
              <th className="p-0">
                <svg viewBox="0 0 10 10" className="mx-auto block h-[10px] w-[10px] bg-black" fill="none" aria-hidden="true">
                  <path d="M5 6V2" stroke="#50c058" /><path d="M5 6l3 1.500" stroke="#d84a4a" strokeWidth="1.500" /><path d="M5 6L2 8" stroke="#c0c8e8" />
                </svg>
              </th>
            </tr>
          </thead>
          <tbody>
            {ITEMS.map((r) => (
              <tr key={r.t} className={r.sel ? "bg-[#3c4450] text-[#f3a01f]" : ""}>
                <td className={`${LINE} p-0`}>{r.eye && <Eye />}</td>
                <td className={`${LINE} p-0`}>{r.sel && <Blocks color="#f3a01f" />}</td>
                <td className={`${LINE} p-0`}>
                  <div className={`flex items-center gap-[2px] whitespace-nowrap ${r.d === 0 ? "pl-[4px]" : r.d === 1 ? "pl-[13px]" : "pl-[22px]"}`}>
                    <span className="w-[12px] shrink-0">{r.open && <Down className="text-[#4d545e]" />}</span>
                    <ItemIcon kind={r.icon} />
                    <span className={`leading-[11px] ${r.bold ? "font-bold" : ""} ${r.dim ? "text-[#6a707b]" : ""}`}>{r.t}</span>
                  </div>
                </td>
                <td className="p-0" />
              </tr>
            ))}
            <tr className="text-[#6f7681]">
              <td className={`${LINE} p-0`} />
              <td className={`${LINE} p-0`} />
              <td className={`${LINE} p-0`}>
                <div className="flex items-center justify-between pr-[3px] pl-[27px] leading-[11px] whitespace-nowrap">
                  (new item) <Down />
                </div>
              </td>
              <td className="p-0" />
            </tr>
          </tbody>
        </table>
        <div className="flex h-[13px]">
          <span className={`${LINE} w-[18px]`} />
          <span className={`${LINE} w-[19px]`} />
          <span className={`${LINE} flex-1`} />
          <span className="w-[19px]" />
        </div>
      </div>
      <div className="flex bg-[#4a4a4a]">
        <ScrollBar className="mb-[27px] ml-[1px] rounded-tr-[4px]" />
      </div>
    </div>
  );
}

type Col = { label: string; w: string; pad?: string };

// A list with a header strip, column rules down to its foot, and a scroll bar.
function ListBox({ cols, rows, dimRow = -1, height }: { cols: Col[]; rows: React.ReactNode[][]; dimRow?: number; height: string }) {
  return (
    <div className={`flex overflow-hidden rounded-[4px] bg-[#9299a6] ${height}`}>
      <table className="h-full min-w-0 flex-1 table-fixed border-collapse text-[#0b0b0d]">
        <colgroup>
          {cols.map((c, i) => (
            <col key={i} className={c.w} />
          ))}
        </colgroup>
        <thead>
          <tr className={`h-[13px] ${HEAD}`}>
            {cols.map((c, i) => (
              <th key={i} className={`p-0 text-left font-normal whitespace-nowrap ${c.pad ?? "pl-[4px]"} ${i < cols.length - 1 ? LINE : ""}`}>{c.label}</th>
            ))}
          </tr>
        </thead>
        <tbody>
          {rows.map((r, k) => (
            <tr key={k} className={`h-[13px] ${k === dimRow ? "text-[#6a707b]" : ""}`}>
              {r.map((cell, i) => (
                <td key={i} className={`p-0 leading-[11px] whitespace-nowrap ${i < cols.length - 1 ? LINE : ""}`}>{cell}</td>
              ))}
            </tr>
          ))}
          <tr>
            {cols.map((_, i) => (
              <td key={i} className={`p-0 ${i < cols.length - 1 ? LINE : ""}`} />
            ))}
          </tr>
        </tbody>
      </table>
      <ScrollBar />
    </div>
  );
}

function Frame({ children }: { children: React.ReactNode }) {
  return <div className="mr-[2px] ml-[1px] border border-t-[#2e2e2e] border-r-[#5a5a5a] border-b-[#5a5a5a] border-l-[#2e2e2e] px-[3px] py-[2px]">{children}</div>;
}

function TwoTabs({ a, b }: { a: string; b: string }) {
  return (
    <div className="mb-[3px] flex h-[12px] overflow-hidden rounded-[4px] border border-[#3a3a3a] leading-[10px]">
      <button type="button" className="flex-1 bg-[#f5a01c] pl-[2px] text-left text-[#2c1c04]">{a}</button>
      <button type="button" className="flex-1 bg-[#656267] pl-[4px] text-left text-[#d2d0d0]">{b}</button>
    </div>
  );
}

const Twisty = ({ label, gap }: { label: string; gap: string }) => (
  <span className={`flex items-center ${gap}`}>
    <Right className="text-[#4d545e]" />
    {label}
  </span>
);

function RightColumn() {
  return (
    <aside className="flex w-[173px] shrink-0 flex-col border-l-2 border-[#2c2c2c]">
      <TabBar more>
        <Tab label="Items" active className="w-[44px]" />
        <Tab label="Shad ..." className="w-[43px]" />
        <Tab label="Images" className="w-[42px]" />
      </TabBar>
      <div className="pt-[3px]"><ItemsPanel /></div>
      <div className="mt-[4px]">
        <TabBar more>
          <Tab label="Lists" active className="w-[44px]" />
          <Tab label="Prope..." className="w-[43px]" />
          <Tab label="Chan ..." className="w-[42px]" />
        </TabBar>
      </div>
      <div className="mt-[2px] flex flex-col gap-px">
        <Frame>
          <ListBox
            height="h-[133px]"
            cols={[{ label: "Name", w: "", pad: "pl-[11px]" }, { label: "Type", w: "w-[39px]", pad: "pl-[9px]" }]}
            rows={["Weight Maps", "UV Maps", "Morph Maps", "Other Maps"].map((m) => [<Twisty key={m} label={m} gap="gap-[11px] pl-[3px]" />, ""])}
          />
        </Frame>
        <Frame>
          <TwoTabs a="Pipeline" b="Presets" />
          <ListBox
            height="h-[118px]"
            cols={[
              { label: "E", w: "w-[15px]" },
              { label: "V", w: "w-[12px]", pad: "pl-[3px]" },
              { label: "A", w: "w-[12px]", pad: "pl-[3px]" },
              { label: "Tool", w: "", pad: "pl-[2px]" },
              { label: "Pre...", w: "w-[29px]", pad: "pl-[2px]" },
            ]}
            rows={[]}
          />
        </Frame>
        <Frame>
          <TwoTabs a="Statistics" b="Info" />
          <ListBox
            height="h-[123px]"
            dimRow={3}
            cols={[
              { label: "+", w: "w-[15px]" },
              { label: "-", w: "w-[15px]", pad: "pl-[5px]" },
              { label: "Name", w: "", pad: "pl-[11px]" },
              { label: "Num", w: "w-[22px]", pad: "pl-[2px]" },
              { label: "Sel", w: "w-[24px]", pad: "pl-[2px]" },
            ]}
            rows={[
              ["Vertices", "9150", "0"],
              ["Edges", "8945", "..."],
              ["Polygons", "8945", "..."],
              ["Items", "15", "..."],
            ].map(([n, c, s]) => [
              <span key="p" className="pl-[4px]">+</span>,
              <span key="m" className="pl-[5px]">-</span>,
              <Twisty key="n" label={n} gap="gap-[10px] pl-[3px]" />,
              <span key="c" className="pl-[1px]">{c}</span>,
              <span key="s" className="pl-[2px]">{s}</span>,
            ])}
          />
        </Frame>
      </div>
      <div className="mt-[3px] flex items-center gap-[4px] border-t border-[#2e2e2e] pt-[3px] pr-[3px] pl-[2px] text-[#d2d0d0]">
        <label htmlFor="command">Command</label>
        <input id="command" className="h-[12px] min-w-0 flex-1 rounded-[4px] bg-[#9299a6] px-1 text-black outline-none" />
      </div>
    </aside>
  );
}

/* ---------- window ---------- */

const MENUS = ["File", "Edit", "View", "Select", "Item", "Geometry", "Texture", "Vertex Map", "Time", "Render", "Layout", "System", "Help"];

function CaptionButton({ label, red = false, children }: { label: string; red?: boolean; children: React.ReactNode }) {
  return (
    <button type="button" aria-label={label} className={`flex h-[16px] w-[16px] items-center justify-center rounded-[3px] border border-white/80 ${red ? "bg-linear-to-b from-[#f08a68] to-[#cc3a10]" : "bg-linear-to-b from-[#5c92f4] to-[#1f52d2]"}`}>
      <svg viewBox="0 0 12 12" className="h-[12px] w-[12px]" fill="none" stroke="#fff" strokeWidth="1.600" aria-hidden="true">
        {children}
      </svg>
    </button>
  );
}

const MODES: [string, string, string, string][] = [
  ["Vertices", "#d8defa", "#97a2dc", "#6a76b8"],
  ["Edges", "#d3daf8", "#9fa9de", "#c6c7d8"],
  ["Polygons", "#d3daf8", "#a4addf", "#e2d78c"],
  ["Items", "#ded8b4", "#c5c2ba", "#a7a6a8"],
];

export default function App() {
  return (
    <div className="flex min-h-screen flex-col overflow-hidden border-b-2 border-[#3f76c4] bg-[#4a4a4a] font-['DejaVu_Sans_Condensed','DejaVu_Sans',sans-serif] text-[8px] leading-[11px]">
      <header className="flex h-[20px] items-center gap-[3px] bg-linear-to-b from-[#2f80f6] via-[#0458e6] to-[#0354e2] pr-[2px] pl-[3px]">
        <svg viewBox="0 0 12 12" className="h-[12px] w-[11px]" aria-hidden="true">
          <path d="M1 3l5-2 5 2v7l-5 2-5-2z" fill="#33506a" />
          <path d="M1 4h2v6H1zM5 3h2v6H5zM8 1h2v9H8z" fill="#d5e2ea" />
        </svg>
        <h1 className="text-[9px] font-bold text-white">modo</h1>
        <div className="ml-auto flex gap-[1px]">
          <CaptionButton label="Minimize"><path d="M2 9h5" strokeWidth="2" /></CaptionButton>
          <CaptionButton label="Restore"><path d="M4.500 4V2.500h5v5H8M2.500 5h5v4.500h-5z" strokeWidth="1.200" /></CaptionButton>
          <CaptionButton label="Close" red><path d="M3 3l6 6M9 3l-6 6" /></CaptionButton>
        </div>
      </header>
      <nav className="flex h-[16px] items-center gap-[9px] border-b-2 border-[#8f8c84] bg-[#f0ebdc] pl-[4px] text-black">
        {MENUS.map((m) => (
          <button key={m} type="button">{m}</button>
        ))}
      </nav>
      <div className="flex flex-1">
        <ToolPalette />
        <main className="flex min-w-0 flex-1 flex-col">
          <TabBar>
            <Tab label="Model" className="w-[43px]" />
            <Tab label="Model Quad" active className="w-[55px]" />
            {["Paint", "UV", "Animate", "Render"].map((t) => (
              <Tab key={t} label={t} className="w-[43px]" />
            ))}
          </TabBar>
          <div className="flex h-[30px] items-center border-l-2 border-[#3a3a3a] pb-[3px] pl-[3px] text-[#d2d0d0]">
            {MODES.map(([t, a, b, c], i) => (
              <button
                key={t}
                type="button"
                className={`flex h-[17px] w-[59px] items-center gap-[2px] border-y border-[#3a3a3a] ${i === 0 ? "bg-[#f5a01c] text-[#2c1c04]" : "bg-[#656267]"} ${i === 2 ? "mr-[4px] rounded-r-[4px]" : ""} ${i === 3 ? "mr-[4px] rounded-r-[4px]" : ""}`}
              >
                <Cube top={a} left={b} right={c} className="h-[15px] w-[15px]" />
                {t}
              </button>
            ))}
            <div className="flex divide-x divide-[#454346] rounded-[4px] border border-[#3a3a3a] bg-[#656267]">
              {["Action Center", "Symmetry: Off", "Falloff", "Snapping", "Work Plane"].map((t) => (
                <Drop key={t} label={t} className="h-[15px] w-[74px]" />
              ))}
            </div>
          </div>
          <div className="grid min-h-[560px] flex-1 grid-cols-2 grid-rows-2 gap-px border-x-[3px] border-b-2 border-[#343434] bg-[#3d4752]">
            <Viewport name="Top" mode="Wireframe" scale="5 m"><TopScene /></Viewport>
            <Viewport name="Perspective" mode="Texture" scale="50 m" rotate><PerspectiveScene /></Viewport>
            <Viewport name="Front" mode="Wireframe" scale="5 m" active><FrontScene /></Viewport>
            <Viewport name="Right" mode="Wireframe" scale="5 m"><RightScene /></Viewport>
          </div>
          <footer className="mt-[1px] flex h-[33px] text-[#d8d8d8]">
            <div className="w-[91px] border border-[#2e2e2e] pt-[3px] text-center">
              <p className="font-bold">3D Tracking</p>
              <p>640 m, 0 m, 104 m</p>
            </div>
            <div className="flex-1 border border-[#2e2e2e] pt-[3px] pl-[3px] leading-[10px] whitespace-nowrap">
              <p>Left Double Click: Select Connected ● Left Click and Drag: 3D Selection: Pick ● Right Click: Viewport Context Menu (popup menu)</p>
              <p>Right Click and Drag: 3D Selection: Area ● Middle Click and Drag: 3D Selection: Pick Through</p>
            </div>
          </footer>
        </main>
        <RightColumn />
      </div>
    </div>
  );
}
